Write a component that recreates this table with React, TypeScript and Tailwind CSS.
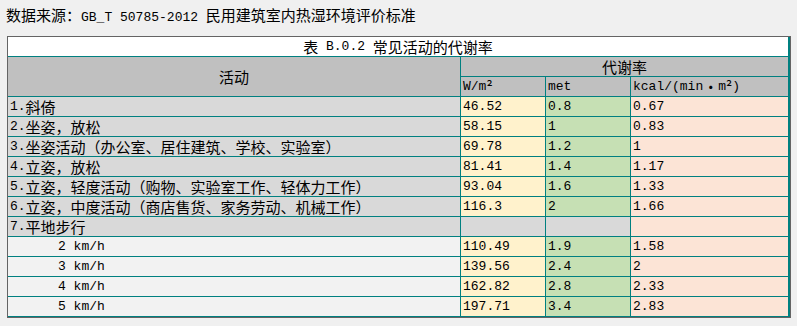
import React from "react";

const T = ({ s }: { s: string }) => {
  const parts = s.match(/[\x20-\x7e]+|[^\x20-\x7e]+/g) || [];
  return (
    <>
      {parts.map((p, i) =>
        /^[\x20-\x7e]+$/.test(p) ? (
          <span key={i} className="font-['Liberation_Mono',monospace] text-[13px] whitespace-pre">
            {p}
          </span>
        ) : (
          <span key={i} className="font-['Noto_Sans_CJK_SC',sans-serif] text-[15px] whitespace-pre">
            {p}
          </span>
        )
      )}
    </>
  );
};

type Row = { a: string; w: string; m: string; k: string; sub?: boolean; group?: boolean };

const rows: Row[] = [
  { a: "1.斜倚", w: "46.52", m: "0.8", k: "0.67" },
  { a: "2.坐姿，放松", w: "58.15", m: "1", k: "0.83" },
  { a: "3.坐姿活动（办公室、居住建筑、学校、实验室）", w: "69.78", m: "1.2", k: "1" },
  { a: "4.立姿，放松", w: "81.41", m: "1.4", k: "1.17" },
  { a: "5.立姿，轻度活动（购物、实验室工作、轻体力工作）", w: "93.04", m: "1.6", k: "1.33" },
  { a: "6.立姿，中度活动（商店售货、家务劳动、机械工作）", w: "116.3", m: "2", k: "1.66" },
  { a: "7.平地步行", w: "", m: "", k: "", group: true },
  { a: "2 km/h", w: "110.49", m: "1.9", k: "1.58", sub: true },
  { a: "3 km/h", w: "139.56", m: "2.4", k: "2", sub: true },
  { a: "4 km/h", w: "162.82", m: "2.8", k: "2.33", sub: true },
  { a: "5 km/h", w: "197.71", m: "3.4", k: "2.83", sub: true },
];

export default function App() {
  return (
    <div className="w-full h-[326px] bg-[#f0f0f0] text-black leading-[19px]">
      <div className="h-[36px] pl-[6px] pt-[5px]">
        <T s="数据来源：GB_T 50785-2012 民用建筑室内热湿环境评价标准" />
      </div>
      <div className="ml-[7px] w-[784px] border border-[#646464]">
        <div className="h-[20px] bg-white border-b border-r-2 border-[#008080] flex items-center justify-center">
          <T s="表 B.0.2 常见活动的代谢率" />
        </div>
        <div className="flex">
          <div className="w-[453px] h-[40px] bg-[#c0c0c0] border-b border-r border-[#008080] flex items-center justify-center">
            <T s="活动" />
          </div>
          <div className="flex flex-col">
            <div className="w-[329px] h-[20px] bg-[#c0c0c0] border-b border-r-2 border-[#008080] flex items-center justify-center">
              <T s="代谢率" />
            </div>
            <div className="flex h-[20px]">
              <div className="w-[85px] bg-[#c0c0c0] border-b border-r border-[#008080] pl-[2px] flex items-start">
                <T s="W/m²" />
              </div>
              <div className="w-[85px] bg-[#c0c0c0] border-b border-r border-[#008080] pl-[2px] flex items-start">
                <T s="met" />
              </div>
              <div className="w-[159px] bg-[#c0c0c0] border-b border-r-2 border-[#008080] pl-[2px] flex items-start">
                <T s="kcal/(min·m²)" />
              </div>
            </div>
          </div>
        </div>
        {rows.map((r, i) => (
          <div key={i} className="flex h-[20px]">
            <div
              className={`w-[453px] border-b border-r border-[#008080] flex items-center ${
                r.sub ? "bg-[#f2f2f2] pl-[50px]" : "bg-[#d9d9d9] pl-[2px]"
              }`}
            >
              <T s={r.a} />
            </div>
            <div
              className={`w-[85px] border-b border-r border-[#008080] pl-[2px] flex items-center ${
                r.group ? "bg-[#d9d9d9]" : "bg-[#fff2cc]"
              }`}
            >
              <T s={r.w} />
            </div>
            <div
              className={`w-[85px] border-b border-r border-[#008080] pl-[2px] flex items-center ${
                r.group ? "bg-[#d9d9d9]" : "bg-[#c6e0b4]"
              }`}
            >
              <T s={r.m} />
            </div>
            <div className="w-[159px] border-b border-r-2 border-[#008080] pl-[2px] flex items-center bg-[#fce4d6]">
              <T s={r.k} />
            </div>
          </div>
        ))}
      </div>
    </div>
  );
}
